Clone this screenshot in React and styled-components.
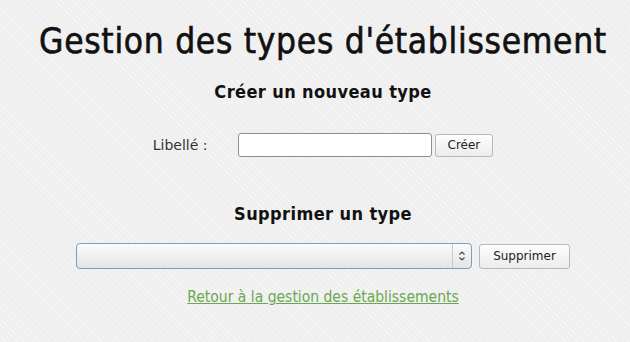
import React from "react";
import styled, { createGlobalStyle } from "styled-components";

const GlobalStyle = createGlobalStyle`
    html, body {
        margin: 0;
        padding: 0;
    }
    body {
        background-color: #efefef;
        background-image: repeating-linear-gradient(
            45deg,
            rgba(255, 255, 255, 0.35) 0px,
            rgba(255, 255, 255, 0.35) 1px,
            transparent 1px,
            transparent 4px
        );
        min-height: 342px;
        font-family: "DejaVu Sans Condensed", "DejaVu Sans", sans-serif;
        color: #111;
    }
`;

const App = () => {
    return (
        <>
            <GlobalStyle />
            <Page>
                <Title>Gestion des types d'établissement</Title>

                {/* création */}
                <SubTitle>Créer un nouveau type</SubTitle>
                <FormRow>
                    <Label htmlFor="libelle">Libellé :</Label>
                    <TextInput id="libelle" type="text" />
                    <Button>Créer</Button>
                </FormRow>

                {/* suppression */}
                <SubTitle $top={46}>Supprimer un type</SubTitle>
                <FormRow $top={18}>
                    <SelectBox>
                        <Arrows>
                            <svg width="8" height="12" viewBox="0 0 8 12">
                                <path d="M1.5 4.5 L4 2 L6.5 4.5" fill="none" stroke="#444" strokeWidth="1.2" />
                                <path d="M1.5 7.5 L4 10 L6.5 7.5" fill="none" stroke="#444" strokeWidth="1.2" />
                            </svg>
                        </Arrows>
                    </SelectBox>
                    <Button $wide>Supprimer</Button>
                </FormRow>

                <BackLink href="#">Retour à la gestion des établissements</BackLink>
            </Page>
        </>
    );
};

export default App;

const Page = styled.div`
    width: 630px;
    box-sizing: border-box;
    padding: 21px 0 0 16px;
    display: flex;
    flex-direction: column;
    align-items: center;
`;

const Title = styled.h1`
    margin: 0;
    font-size: 35px;
    font-weight: 500;
    line-height: 40px;
    letter-spacing: 0.7px;
    -webkit-text-stroke: 0.6px #111;
`;

const SubTitle = styled.h2`
    margin: ${(p) => p.$top || 20}px 0 0;
    font-size: 18px;
    font-weight: 600;
    line-height: 22px;
    letter-spacing: 0.4px;
`;

const FormRow = styled.div`
    margin-top: ${(p) => p.$top || 30}px;
    display: flex;
    align-items: center;
`;

const Label = styled.label`
    font-family: "DejaVu Sans", sans-serif;
    font-size: 14px;
    color: #333;
    margin-right: 30px;
`;

const TextInput = styled.input`
    width: 194px;
    height: 24px;
    box-sizing: border-box;
    border: 1px solid #8e8e8e;
    border-radius: 3px;
    background: #fff;
    margin: 0;
`;

const Button = styled.button`
    margin-left: ${(p) => (p.$wide ? 7 : 3)}px;
    height: ${(p) => (p.$wide ? 25 : 23)}px;
    padding: 0 ${(p) => (p.$wide ? 13 : 12)}px;
    box-sizing: border-box;
    border: 1px solid #b8b8b8;
    border-radius: 3px;
    background: linear-gradient(#fdfdfd, #ececec);
    font-family: "DejaVu Sans", sans-serif;
    font-size: 12px;
    color: #222;
`;

const SelectBox = styled.div`
    width: 396px;
    height: 26px;
    box-sizing: border-box;
    border: 1px solid #7f9db9;
    border-radius: 4px;
    background: linear-gradient(#fbfbfb, #e4e4e4);
    display: flex;
    justify-content: flex-end;
`;

const Arrows = styled.div`
    width: 18px;
    border-left: 1px solid #c8c8c8;
    display: flex;
    align-items: center;
    justify-content: center;
`;

const BackLink = styled.a`
    margin-top: 19px;
    font-size: 15.5px;
    color: #6aa84f;
    text-decoration: underline;
`;
